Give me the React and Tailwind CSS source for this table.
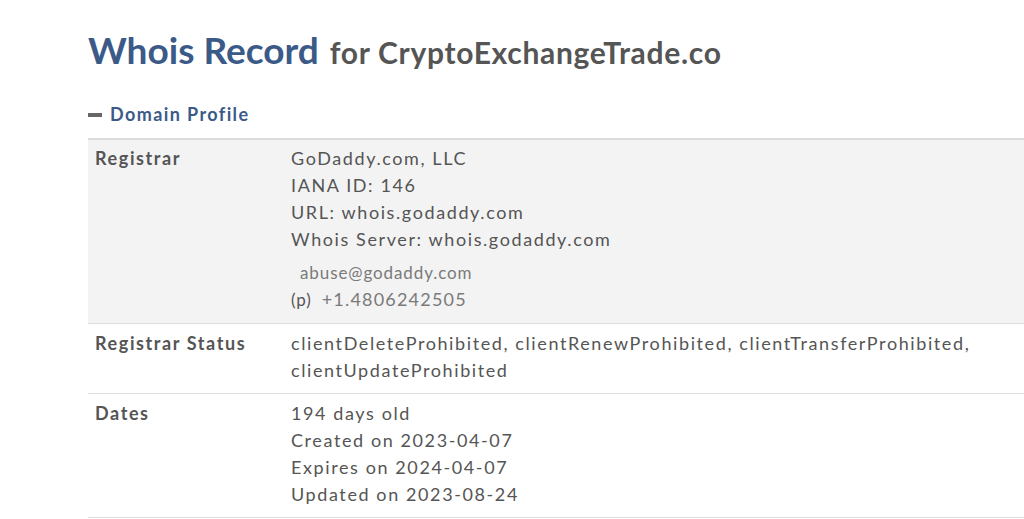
import React from "react";

const rows = [
  {
    label: "Registrar",
    shaded: true,
    lines: [
      "GoDaddy.com, LLC",
      "IANA ID: 146",
      "URL: whois.godaddy.com",
      "Whois Server: whois.godaddy.com",
    ],
    contact: true,
  },
  {
    label: "Registrar Status",
    lines: [
      "clientDeleteProhibited, clientRenewProhibited, clientTransferProhibited,",
      "clientUpdateProhibited",
    ],
  },
  {
    label: "Dates",
    lines: [
      "194 days old",
      "Created on 2023-04-07",
      "Expires on 2024-04-07",
      "Updated on 2023-08-24",
    ],
  },
];

function Row({ row }) {
  return (
    <div
      className={`flex border-b border-[#dedede] ${
        row.shaded ? "bg-[#f3f3f3] pt-[5px] pb-[11px]" : "bg-white pt-[6px] pb-[9px]"
      }`}
    >
      <div className="w-[203px] shrink-0 pl-[7px] font-bold text-[#555] leading-[27px]">
        {row.label}
      </div>
      <div className="flex-1 text-[#555] leading-[27px] whitespace-nowrap">
        {row.lines.map((l) => (
          <div key={l}>{l}</div>
        ))}
        {row.contact && (
          <div className="mt-[7px] text-[17px] text-[#7a7a7a] tracking-[0.9px] leading-[26px]">
            <div className="pl-[9px]">abuse@godaddy.com</div>
            <div className="h-[26px]">
              <span className="text-[#555]">(p)</span>
              <span className="ml-[10px] text-[18px] tracking-[1.2px]">+1.4806242505</span>
            </div>
          </div>
        )}
      </div>
    </div>
  );
}

export default function App() {
  return (
    <div className="w-[1024px] h-[519px] overflow-hidden bg-white font-['Lato','Liberation_Sans',sans-serif]">
      <div className="pl-[88px] pt-[28px]">
        <h1 className="flex items-baseline gap-[11px] whitespace-nowrap">
          <span className="text-[37px] font-bold text-[#3b5a88] leading-[44px]">
            Whois Record
          </span>
          <span className="text-[30px] font-bold text-[#555] tracking-[0.7px]">
            for CryptoExchangeTrade.co
          </span>
        </h1>

        {/* DOMAIN PROFILE */}
        <div className="mt-[26px] flex items-center gap-[8px] text-[18px] font-bold text-[#3b5a88] tracking-[1.4px]">
          <span className="block w-[14px] h-[4px] bg-[#666]" />
          <span>Domain Profile</span>
        </div>

        <div className="mt-[10px] border-t-[2px] border-[#dcdcdc] text-[18px] tracking-[1.6px]">
          {rows.map((r) => (
            <Row key={r.label} row={r} />
          ))}
        </div>
      </div>
    </div>
  );
}
